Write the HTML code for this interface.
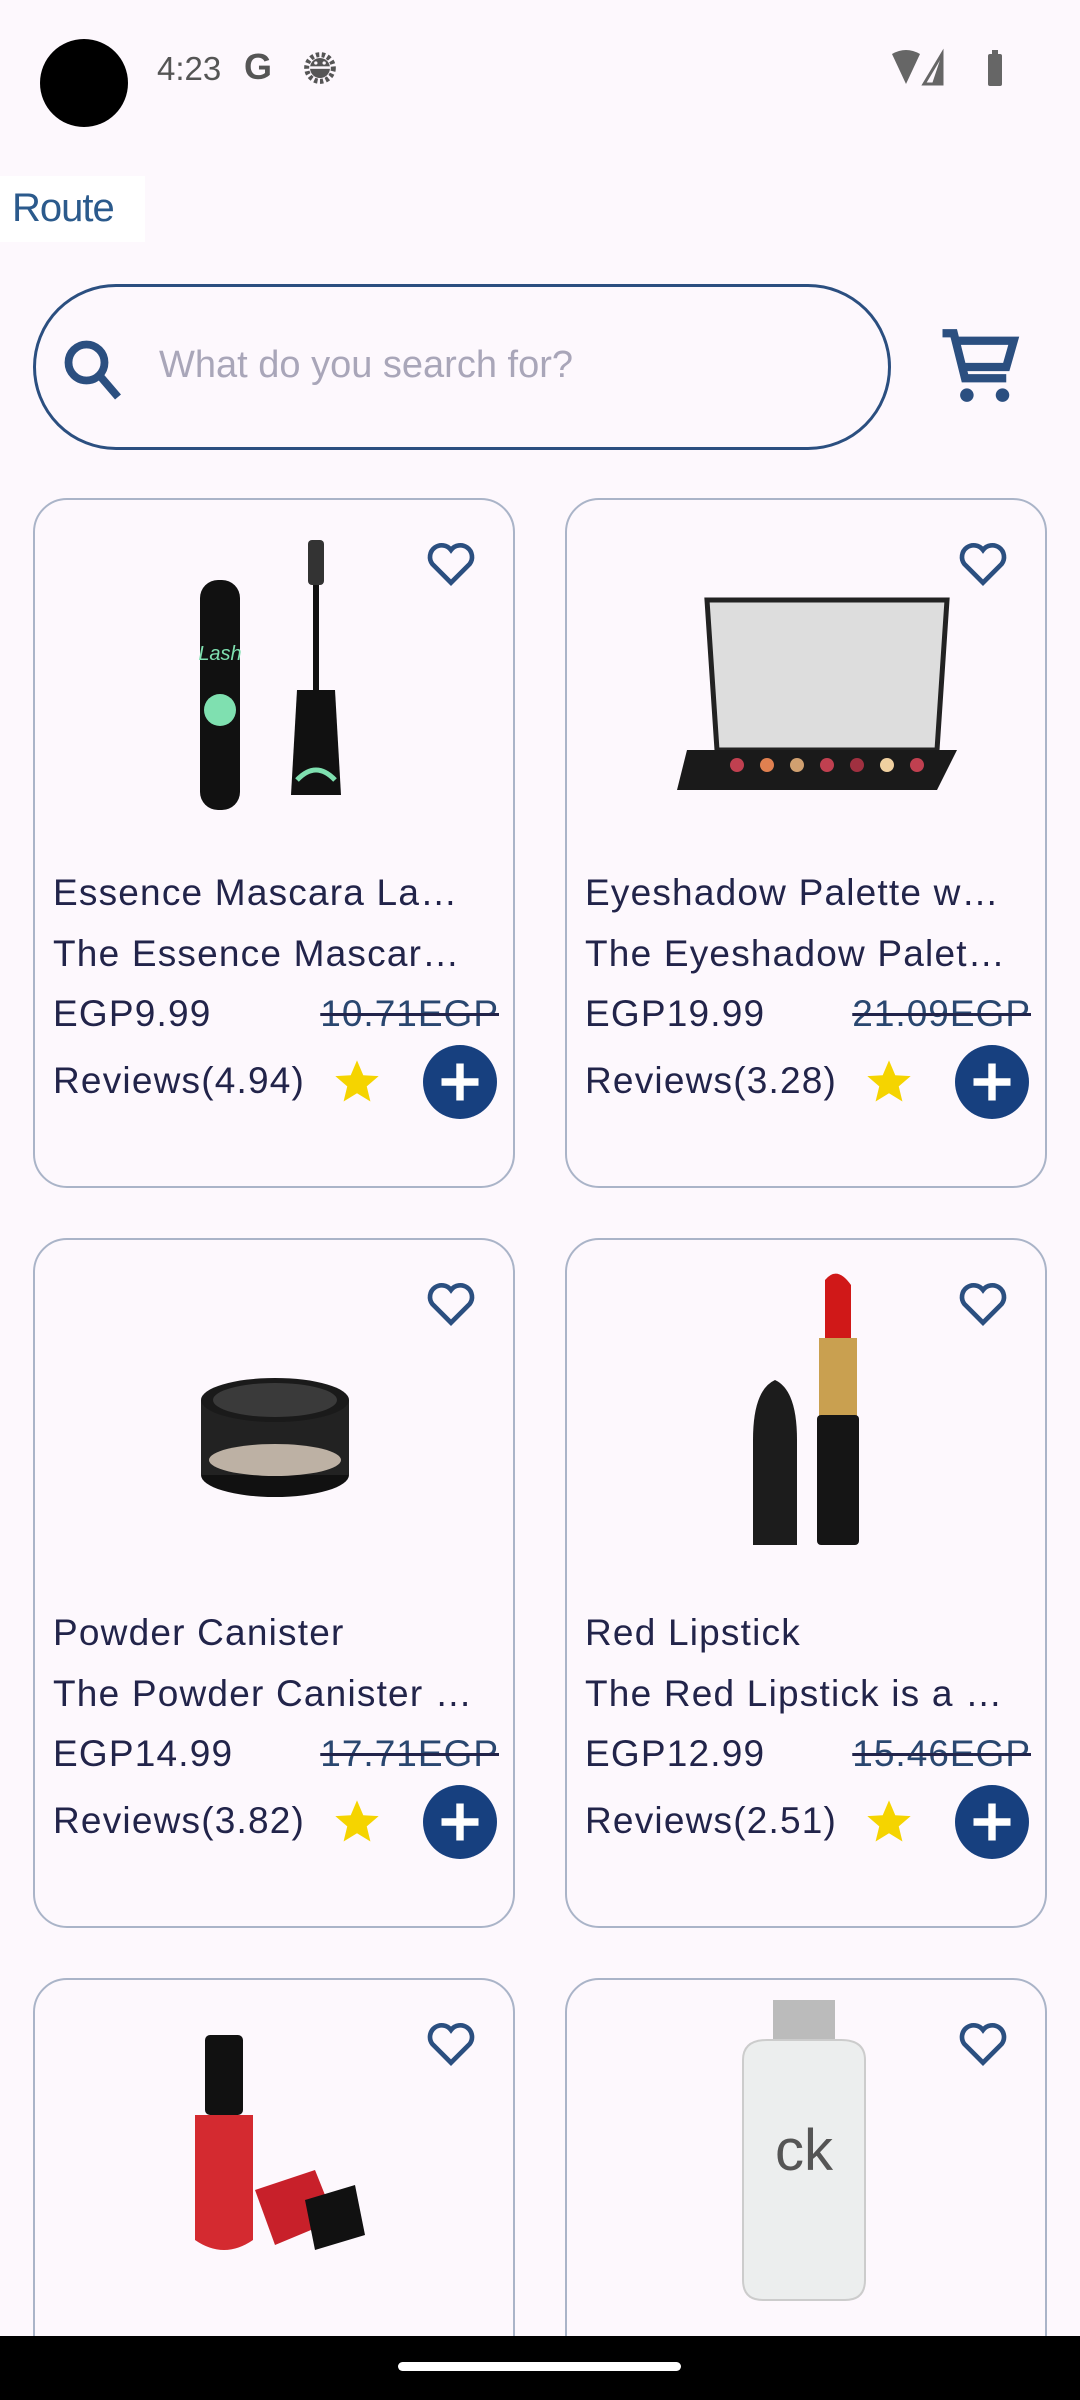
<!DOCTYPE html>
<html style="width:1080px;height:2400px;overflow:hidden"><head><meta charset="utf-8"><style>
*{margin:0;padding:0;box-sizing:border-box}
body{width:1080px;height:2400px;background:#fdf8fd;position:relative;overflow:hidden;font-family:"Liberation Sans",Roboto,sans-serif}
.abs{position:absolute}
.card{position:absolute;width:482px;height:690px;border:2.5px solid #aab4c8;border-radius:34px;background:#fdf8fd;overflow:hidden}
.card .t{position:absolute;left:18px;width:455px;white-space:nowrap;overflow:hidden;color:#22244a;font-size:37px;letter-spacing:1.2px}
.heart{position:absolute;left:388px;top:36px;width:56px;height:56px}
.plus{position:absolute;left:388px;top:545px;width:74px;height:74px;border-radius:50%;background:#17407f}
.star{position:absolute;left:296px;top:556px;width:52px;height:52px}
.old{position:absolute;right:14px;color:#2a4770;font-size:37px;letter-spacing:1px;text-decoration:line-through;text-decoration-color:#22244a}
.img{position:absolute;left:0;top:20px;width:482px;height:320px}
</style></head><body>
<div class="abs" style="left:40px;top:39px;width:88px;height:88px;border-radius:50%;background:#000"></div>
<div class="abs" style="left:157px;top:50px;font-size:33px;color:#555">4:23</div>
<div class="abs" style="left:244px;top:46px;font-size:36px;font-weight:bold;color:#555">G</div>
<svg class="abs" style="left:300px;top:48px" width="40" height="40" viewBox="0 0 24 24"><circle cx="12" cy="12" r="8" fill="none" stroke="#555" stroke-width="3" stroke-dasharray="2 1.5"/><circle cx="12" cy="12" r="6" fill="#555"/><rect x="6" y="11" width="12" height="1.5" fill="#fdf8fd"/><circle cx="9.5" cy="9" r="1" fill="#fdf8fd"/><circle cx="14.5" cy="9" r="1" fill="#fdf8fd"/></svg>
<svg class="abs" style="left:890px;top:48px" width="120" height="40" viewBox="0 0 120 40"><path d="M2 6 Q16 -2 30 6 L16 36 Z" fill="#666"/><path d="M52 6 L52 36 L34 36 Z" fill="none" stroke="#666" stroke-width="3"/><path d="M52 6 L52 36 L42 36 Z" fill="#666"/><rect x="98" y="6" width="14" height="32" rx="2" fill="#666"/><rect x="102" y="2" width="6" height="5" fill="#666"/></svg>
<div class="abs" style="left:0;top:176px;width:145px;height:66px;background:#fff"></div>
<div class="abs" style="left:12px;top:186px;font-size:40px;color:#2b5a8c;letter-spacing:-1px">Route</div>
<div class="abs" style="left:33px;top:284px;width:858px;height:166px;border:3px solid #2b4f80;border-radius:83px"></div>
<svg class="abs" style="left:58px;top:334px" width="72" height="72" viewBox="0 0 24 24"><circle cx="9.5" cy="9.5" r="6" fill="none" stroke="#2b4f80" stroke-width="2.6"/><path d="M14 14 L20 21" stroke="#2b4f80" stroke-width="2.6"/></svg>
<div class="abs" style="left:159px;top:344px;font-size:38px;color:#a9a6b9">What do you search for?</div>
<svg class="abs" style="left:935px;top:322px" width="90" height="90" viewBox="0 0 24 24"><path d="M2 3 H5 L8 15 H19 M6 5 H21 L19 12 H8" fill="none" stroke="#2b4f80" stroke-width="2.2"/><circle cx="8.5" cy="19.5" r="1.8" fill="#2b4f80"/><circle cx="18" cy="19.5" r="1.8" fill="#2b4f80"/></svg>

<div class="card" style="left:33px;top:498px">
 <svg class="img" viewBox="0 0 482 320"><rect x="165" y="60" width="40" height="230" rx="18" fill="#111"/><text x="185" y="140" font-size="20" fill="#7fe0b0" text-anchor="middle" font-style="italic">Lash</text><circle cx="185" cy="190" r="16" fill="#7fe0b0"/><rect x="278" y="20" width="6" height="160" fill="#111"/><rect x="273" y="20" width="16" height="45" rx="4" fill="#333"/><path d="M262 170 H300 L306 275 H256 Z" fill="#111"/><path d="M262 260 Q281 240 300 260" stroke="#7fe0b0" stroke-width="5" fill="none"/></svg>
 <svg class="heart" viewBox="0 0 24 24"><path d="M12 20 L4 12 A4.5 4.5 0 0 1 12 6 A4.5 4.5 0 0 1 20 12 Z" fill="none" stroke="#2b4f80" stroke-width="2"/></svg>
 <div class="t" style="top:372px">Essence Mascara La…</div>
 <div class="t" style="top:433px">The Essence Mascar…</div>
 <div class="t" style="top:493px">EGP9.99</div><div class="old" style="top:493px">10.71EGP</div>
 <div class="t" style="top:560px">Reviews(4.94)</div>
 <svg class="star" viewBox="0 0 24 24"><path d="M12 2 L14.9 8.9 22 9.3 16.5 14 18.2 21 12 17.2 5.8 21 7.5 14 2 9.3 9.1 8.9Z" fill="#f5d400"/></svg>
 <div class="plus"><svg width="74" height="74" viewBox="0 0 24 24"><path d="M12 6 V18 M6 12 H18" stroke="#fff" stroke-width="2.4"/></svg></div>
</div>

<div class="card" style="left:565px;top:498px">
 <svg class="img" viewBox="0 0 482 320"><path d="M140 80 H380 L370 230 H150 Z" fill="#ddd" stroke="#222" stroke-width="5"/><path d="M120 230 H390 L370 270 H110 Z" fill="#1a1a1a"/><g fill="#c04050"><circle cx="170" cy="245" r="7"/><circle cx="200" cy="245" r="7" fill="#e08050"/><circle cx="230" cy="245" r="7" fill="#d0a070"/><circle cx="260" cy="245" r="7"/><circle cx="290" cy="245" r="7" fill="#a03040"/><circle cx="320" cy="245" r="7" fill="#f0d0a0"/><circle cx="350" cy="245" r="7"/></g></svg>
 <svg class="heart" viewBox="0 0 24 24"><path d="M12 20 L4 12 A4.5 4.5 0 0 1 12 6 A4.5 4.5 0 0 1 20 12 Z" fill="none" stroke="#2b4f80" stroke-width="2"/></svg>
 <div class="t" style="top:372px">Eyeshadow Palette w…</div>
 <div class="t" style="top:433px">The Eyeshadow Palet…</div>
 <div class="t" style="top:493px">EGP19.99</div><div class="old" style="top:493px">21.09EGP</div>
 <div class="t" style="top:560px">Reviews(3.28)</div>
 <svg class="star" viewBox="0 0 24 24"><path d="M12 2 L14.9 8.9 22 9.3 16.5 14 18.2 21 12 17.2 5.8 21 7.5 14 2 9.3 9.1 8.9Z" fill="#f5d400"/></svg>
 <div class="plus"><svg width="74" height="74" viewBox="0 0 24 24"><path d="M12 6 V18 M6 12 H18" stroke="#fff" stroke-width="2.4"/></svg></div>
</div>

<div class="card" style="left:33px;top:1238px">
 <svg class="img" viewBox="0 0 482 320"><ellipse cx="240" cy="215" rx="74" ry="22" fill="#111"/><rect x="166" y="140" width="148" height="75" fill="#222"/><ellipse cx="240" cy="140" rx="74" ry="22" fill="#1a1a1a"/><ellipse cx="240" cy="140" rx="62" ry="17" fill="#3a3a3a"/><ellipse cx="240" cy="200" rx="66" ry="16" fill="#bdb1a4"/></svg>
 <svg class="heart" viewBox="0 0 24 24"><path d="M12 20 L4 12 A4.5 4.5 0 0 1 12 6 A4.5 4.5 0 0 1 20 12 Z" fill="none" stroke="#2b4f80" stroke-width="2"/></svg>
 <div class="t" style="top:372px">Powder Canister</div>
 <div class="t" style="top:433px">The Powder Canister …</div>
 <div class="t" style="top:493px">EGP14.99</div><div class="old" style="top:493px">17.71EGP</div>
 <div class="t" style="top:560px">Reviews(3.82)</div>
 <svg class="star" viewBox="0 0 24 24"><path d="M12 2 L14.9 8.9 22 9.3 16.5 14 18.2 21 12 17.2 5.8 21 7.5 14 2 9.3 9.1 8.9Z" fill="#f5d400"/></svg>
 <div class="plus"><svg width="74" height="74" viewBox="0 0 24 24"><path d="M12 6 V18 M6 12 H18" stroke="#fff" stroke-width="2.4"/></svg></div>
</div>

<div class="card" style="left:565px;top:1238px">
 <svg class="img" viewBox="0 0 482 320"><path d="M258 20 Q270 5 284 25 V80 H258 Z" fill="#d01818"/><rect x="252" y="78" width="38" height="80" fill="#c9a050"/><rect x="250" y="155" width="42" height="130" rx="4" fill="#151515"/><path d="M186 285 V180 Q186 130 208 120 Q230 130 230 180 V285 Z" fill="#1c1c1c"/></svg>
 <svg class="heart" viewBox="0 0 24 24"><path d="M12 20 L4 12 A4.5 4.5 0 0 1 12 6 A4.5 4.5 0 0 1 20 12 Z" fill="none" stroke="#2b4f80" stroke-width="2"/></svg>
 <div class="t" style="top:372px">Red Lipstick</div>
 <div class="t" style="top:433px">The Red Lipstick is a …</div>
 <div class="t" style="top:493px">EGP12.99</div><div class="old" style="top:493px">15.46EGP</div>
 <div class="t" style="top:560px">Reviews(2.51)</div>
 <svg class="star" viewBox="0 0 24 24"><path d="M12 2 L14.9 8.9 22 9.3 16.5 14 18.2 21 12 17.2 5.8 21 7.5 14 2 9.3 9.1 8.9Z" fill="#f5d400"/></svg>
 <div class="plus"><svg width="74" height="74" viewBox="0 0 24 24"><path d="M12 6 V18 M6 12 H18" stroke="#fff" stroke-width="2.4"/></svg></div>
</div>

<div class="card" style="left:33px;top:1978px;height:400px">
 <svg class="img" viewBox="0 0 482 320"><rect x="170" y="35" width="38" height="80" rx="5" fill="#111"/><path d="M160 115 H218 V240 Q189 260 160 240 Z" fill="#d42a30"/><path d="M220 190 L280 170 L300 220 L240 245 Z" fill="#c8202a"/><path d="M270 200 L320 185 L330 235 L280 250 Z" fill="#111"/></svg>
 <svg class="heart" viewBox="0 0 24 24"><path d="M12 20 L4 12 A4.5 4.5 0 0 1 12 6 A4.5 4.5 0 0 1 20 12 Z" fill="none" stroke="#2b4f80" stroke-width="2"/></svg>
</div>
<div class="card" style="left:565px;top:1978px;height:400px">
 <svg class="img" viewBox="0 0 482 320"><rect x="206" y="0" width="62" height="40" fill="#bbb"/><path d="M176 60 Q176 40 200 40 H274 Q298 40 298 60 V280 Q298 300 278 300 H196 Q176 300 176 280 Z" fill="#eceeee" stroke="#ccc" stroke-width="2"/><text x="237" y="170" font-size="58" fill="#555" text-anchor="middle">ck</text></svg>
 <svg class="heart" viewBox="0 0 24 24"><path d="M12 20 L4 12 A4.5 4.5 0 0 1 12 6 A4.5 4.5 0 0 1 20 12 Z" fill="none" stroke="#2b4f80" stroke-width="2"/></svg>
</div>

<div class="abs" style="left:0;top:2336px;width:1080px;height:64px;background:#000"></div>
<div class="abs" style="left:398px;top:2362px;width:283px;height:9px;border-radius:5px;background:#fff"></div>
</body></html>
